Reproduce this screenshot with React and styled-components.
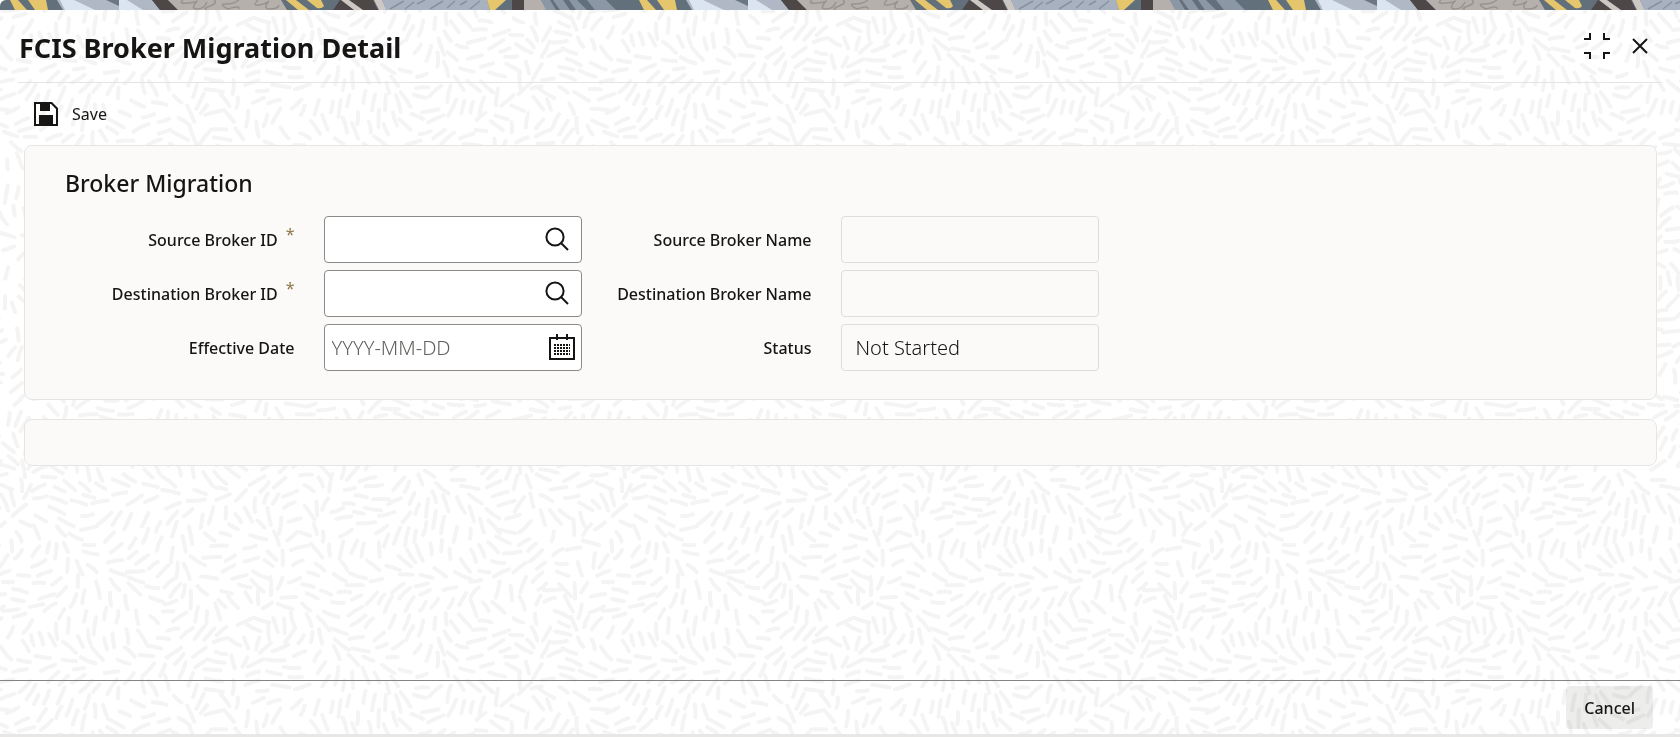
import React from 'react';
import styled, { createGlobalStyle, css } from 'styled-components';

const GlobalStyle = createGlobalStyle`
  *, *::before, *::after { box-sizing: border-box; }
  body {
    margin: 0;
    background: #fff;
    color: #161513;
    font-family: "Noto Sans", "Open Sans", sans-serif;
    font-size: 16px;
    line-height: 24px;
  }
`;

/* ---------- background texture ---------- */

const TILE = 600;

function makeDashes() {
  let seed = 20;
  const rand = () => {
    seed = (seed * 1664525 + 1013904223) % 4294967296;
    return seed / 4294967296;
  };
  const k = (Math.PI * 2) / TILE;
  const angleAt = (x, y) =>
    1.6 * Math.sin(k * (2 * x + y) + 0.6) +
    1.5 * Math.sin(k * (3 * y - x) + 2.1) +
    0.8 * Math.cos(k * (4 * x + 2 * y));
  const wrap = (d) => d - TILE * Math.round(d / TILE);
  const placed = [];
  for (let i = 0; i < 30000; i += 1) {
    const x = rand() * TILE;
    const y = rand() * TILE;
    const a = angleAt(x, y);
    const c = Math.cos(a);
    const s = Math.sin(a);
    const free = placed.every((p) => {
      const dx = wrap(x - p.x);
      const dy = wrap(y - p.y);
      const along = (dx * c + dy * s) / 20;
      const across = (dy * c - dx * s) / 8;
      return along * along + across * across > 1;
    });
    if (free) {
      const half = 5 + rand() * 4;
      const bend = (rand() - 0.5) * 3;
      placed.push({ x, y, a, half, bend });
    }
  }
  let d = '';
  const f = (n) => n.toFixed(1);
  placed.forEach(({ x, y, a, half, bend }) => {
    const c = Math.cos(a);
    const s = Math.sin(a);
    const ox = x < 14 ? [0, TILE] : x > TILE - 14 ? [0, -TILE] : [0];
    const oy = y < 14 ? [0, TILE] : y > TILE - 14 ? [0, -TILE] : [0];
    ox.forEach((tx) =>
      oy.forEach((ty) => {
        const px = x + tx;
        const py = y + ty;
        d += `M${f(px - c * half)} ${f(py - s * half)}Q${f(px - s * bend)} ${f(py + c * bend)} ${f(px + c * half)} ${f(py + s * half)}`;
      })
    );
  });
  return d;
}

const DASHES = makeDashes();

const TextureSvg = styled.svg`
  position: fixed;
  inset: 0;
  width: 100%;
  height: 100%;
  z-index: -1;
`;

const Texture = () => (
  <TextureSvg aria-hidden="true">
    <defs>
      <pattern id="dashes" width={TILE} height={TILE} patternUnits="userSpaceOnUse">
        <path d={DASHES} fill="none" stroke="#f4f4f4" strokeWidth="4" strokeLinecap="round" />
      </pattern>
    </defs>
    <rect width="100%" height="100%" fill="url(#dashes)" />
  </TextureSvg>
);

/* ---------- decorative strip ---------- */

const StripSvg = styled.svg`
  display: block;
  width: 100%;
  height: 10px;
  border-top-left-radius: 6px;
`;

const Strip = () => (
  <StripSvg aria-hidden="true">
    <defs>
      <pattern id="strip" width="629" height="10" patternUnits="userSpaceOnUse">
        <rect width="629" height="10" fill="#62707b" />
        <path fill="#e6c66c" d="M10 0H18L27 10H15ZM28 0H46L48 10H35ZM286 0H296L309 10H298ZM307 0H321L324 6Q322 9 317 8Z" />
        <path fill="#b0b8c5" d="M57 0H152L160 10H63Z" />
        <path fill="#dbe5f1" d="M60 0H74L95 10H65ZM119 0H127L143 10H119Z" />
        <path fill="#6b7782" d="M106 0H119V6Z" />
        <path fill="#4d4747" d="M152 0H168L178 10H160Z" />
        <path fill="#b6b0ac" d="M168 0H281L287 10H178Z" />
        <path
          fill="none"
          stroke="#989390"
          strokeWidth="1.5"
          d="M183 0Q178 4 188 3T197 1Q190 9 197 9T207 2M214 0Q218 3 210 6T207 9M239 0Q234 4 226 4T228 9Q240 5 239 9M258 0Q252 6 259 5T269 1Q262 9 270 9T279 5"
        />
        <path fill="#4d4747" d="M340 0H373L378 10H333Z" />
        <path fill="#cdc8c3" d="M341 0H349L363 10H354ZM374 0H382L387 10H379Z" />
        <path fill="#a8b1c0" d="M382 0H487L490 10H386Z" />
        <path
          fill="none"
          stroke="#87919f"
          strokeWidth="1.5"
          d="M404 1L390 9M414 2L405 9M425 0L417 4M443 1L430 9M455 1L447 8M467 1L460 5M480 1L470 9"
        />
        <path fill="#e6c66c" d="M487 0H506L495 10H490Z" />
        <path fill="#4d4747" d="M512 0H524V10H512Z" />
        <path fill="#b6b0ac" d="M524 0H541L547 10H524Z" />
        <path fill="#8c97a5" d="M541 0H550L556 10H546ZM553 0H563L570 10H560ZM569 0H577L587 10H576ZM587 0H606L616 10H595Z" />
      </pattern>
    </defs>
    <rect width="100%" height="10" fill="url(#strip)" />
  </StripSvg>
);

/* ---------- page frame ---------- */

const Page = styled.div`
  display: flex;
  flex-direction: column;
  min-height: 100vh;
  border-bottom: 3px solid #e8e7e6;
`;

const Header = styled.header`
  display: flex;
  align-items: center;
  justify-content: space-between;
  height: 73px;
  margin: 0 18px;
  padding: 0 14px 0 1px;
  border-bottom: 1px solid #e4e4e3;
`;

const Title = styled.h1`
  margin: 0;
  padding-top: 4px;
  font-size: 27px;
  line-height: 36px;
  font-weight: 700;
`;

const HeaderActions = styled.div`
  display: flex;
  align-items: center;
  gap: 22px;
`;

const IconButton = styled.button`
  display: flex;
  align-items: center;
  justify-content: center;
  padding: 0;
  border: 0;
  background: none;
  color: #161513;
  cursor: pointer;
`;

const Toolbar = styled.div`
  display: flex;
  align-items: center;
  height: 62px;
  padding: 0 32px;
`;

const ToolButton = styled.button`
  display: flex;
  align-items: center;
  gap: 12px;
  padding: 0;
  border: 0;
  background: none;
  color: #161513;
  font: inherit;
  cursor: pointer;
`;

const Main = styled.main`
  flex: 1;
  display: flex;
  flex-direction: column;
  gap: 19px;
  padding: 0 23px 0 24px;
`;

const Panel = styled.section`
  min-height: 47px;
  padding: ${(p) => (p.$empty ? '0' : '19px 40px 28px')};
  border: 1px solid #e6e5e3;
  border-radius: 8px;
  background: #fbfaf8;
`;

const PanelTitle = styled.h2`
  margin: 0 0 15px;
  font-size: 23px;
  line-height: 36px;
  font-weight: 500;
`;

const FieldGrid = styled.div`
  display: grid;
  grid-template-columns: repeat(3, minmax(0, 1fr));
  grid-template-rows: repeat(3, 47px);
  grid-auto-flow: column;
  row-gap: 7px;
`;

const Field = styled.div`
  display: grid;
  grid-template-columns: repeat(2, minmax(0, 1fr));
  align-items: center;
`;

const Label = styled.label`
  display: flex;
  justify-content: flex-end;
  gap: 8px;
  padding-right: 29px;
  font-weight: 500;
  white-space: nowrap;
`;

const Required = styled.span`
  color: #8f7545;
  font-weight: 400;
  line-height: 12px;
`;

const Control = styled.div`
  display: flex;
  align-items: center;
  height: 47px;
  border: 1px solid #8b8a88;
  border-radius: 4px;
  background: #fff;
  ${(p) =>
    p.$readOnly &&
    css`
      border-color: #dedddb;
      background: transparent;
    `}
`;

const Input = styled.input`
  flex: 1;
  min-width: 0;
  height: 100%;
  padding: 0 ${(p) => (p.readOnly ? '14px' : '7px')};
  border: 0;
  outline: 0;
  background: none;
  color: #161513;
  font: inherit;
  font-size: 20px;
  font-weight: 300;
  &::placeholder {
    color: #5f5e5c;
    opacity: 1;
  }
`;

const Adornment = styled(IconButton)`
  margin-right: ${(p) => (p.$tight ? '6px' : '12px')};
  padding-bottom: 2px;
`;

const Footer = styled.footer`
  display: flex;
  justify-content: flex-end;
  padding: 5px 27px;
  border-top: 1px solid #858483;
`;

const CancelButton = styled.button`
  height: 43px;
  padding: 0 18px;
  border: 0;
  border-radius: 4px;
  background: rgba(22, 21, 19, 0.08);
  color: #161513;
  font: inherit;
  font-weight: 500;
  cursor: pointer;
`;

/* ---------- icons ---------- */

const CollapseIcon = () => (
  <svg width="26" height="26" viewBox="0 0 26 26" fill="none" stroke="currentColor" strokeWidth="2" aria-hidden="true">
    <path d="M0 6H6V0M20 0V6H26M0 20H6V26M20 26V20H26" />
  </svg>
);

const CloseIcon = () => (
  <svg width="16" height="16" viewBox="0 0 16 16" fill="none" stroke="currentColor" strokeWidth="2" aria-hidden="true">
    <path d="M1 1L15 15M15 1L1 15" />
  </svg>
);

const SaveIcon = () => (
  <svg width="28" height="28" viewBox="0 0 28 28" aria-hidden="true">
    <path
      fill="currentColor"
      fillRule="evenodd"
      d="M2 2H20L26 8V26H2ZM4 4V24H7V15H21V24H24V9L19 4H18V11H8V4Z"
    />
  </svg>
);

const SearchIcon = () => (
  <svg width="24" height="24" viewBox="0 0 24 24" fill="none" stroke="currentColor" strokeWidth="2" aria-hidden="true">
    <circle cx="10" cy="10" r="8.6" />
    <path d="M16 16L23 23" />
  </svg>
);

const CalendarIcon = () => (
  <svg width="26" height="26" viewBox="0 0 26 26" fill="none" stroke="currentColor" aria-hidden="true">
    <path strokeWidth="2" d="M1 4H25V25H1ZM8 0V6M18 0V6" />
    <path strokeWidth="2" strokeDasharray="2 1" d="M5 11H21M5 14H21M5 17H21M5 20H21" />
  </svg>
);

/* ---------- fields ---------- */

const FIELDS = [
  { id: 'sourceBrokerId', label: 'Source Broker ID', required: true, icon: 'search' },
  { id: 'destBrokerId', label: 'Destination Broker ID', required: true, icon: 'search' },
  { id: 'effectiveDate', label: 'Effective Date', placeholder: 'YYYY-MM-DD', icon: 'calendar' },
  { id: 'sourceBrokerName', label: 'Source Broker Name', readOnly: true, value: '' },
  { id: 'destBrokerName', label: 'Destination Broker Name', readOnly: true, value: '' },
  { id: 'status', label: 'Status', readOnly: true, value: 'Not Started' },
];

const FormField = ({ id, label, required, icon, readOnly, placeholder, value }) => (
  <Field>
    <Label htmlFor={id}>
      {label}
      {required && <Required aria-hidden="true">*</Required>}
    </Label>
    <Control $readOnly={readOnly}>
      <Input
        id={id}
        type="text"
        required={required}
        readOnly={readOnly}
        placeholder={placeholder}
        defaultValue={value}
      />
      {icon === 'search' && (
        <Adornment type="button" aria-label={`Search ${label}`}>
          <SearchIcon />
        </Adornment>
      )}
      {icon === 'calendar' && (
        <Adornment type="button" aria-label={`Pick ${label}`} $tight>
          <CalendarIcon />
        </Adornment>
      )}
    </Control>
  </Field>
);

export default function App() {
  return (
    <>
      <GlobalStyle />
      <Texture />
      <Page>
        <Strip />
        <Header>
          <Title>FCIS Broker Migration Detail</Title>
          <HeaderActions>
            <IconButton type="button" aria-label="Exit full screen">
              <CollapseIcon />
            </IconButton>
            <IconButton type="button" aria-label="Close">
              <CloseIcon />
            </IconButton>
          </HeaderActions>
        </Header>
        <Toolbar>
          <ToolButton type="button">
            <SaveIcon />
            Save
          </ToolButton>
        </Toolbar>
        <Main>
          <Panel aria-labelledby="brokerMigration">
            <PanelTitle id="brokerMigration">Broker Migration</PanelTitle>
            <FieldGrid>
              {FIELDS.map((field) => (
                <FormField key={field.id} {...field} />
              ))}
            </FieldGrid>
          </Panel>
          <Panel $empty />
        </Main>
        <Footer>
          <CancelButton type="button">Cancel</CancelButton>
        </Footer>
      </Page>
    </>
  );
}
